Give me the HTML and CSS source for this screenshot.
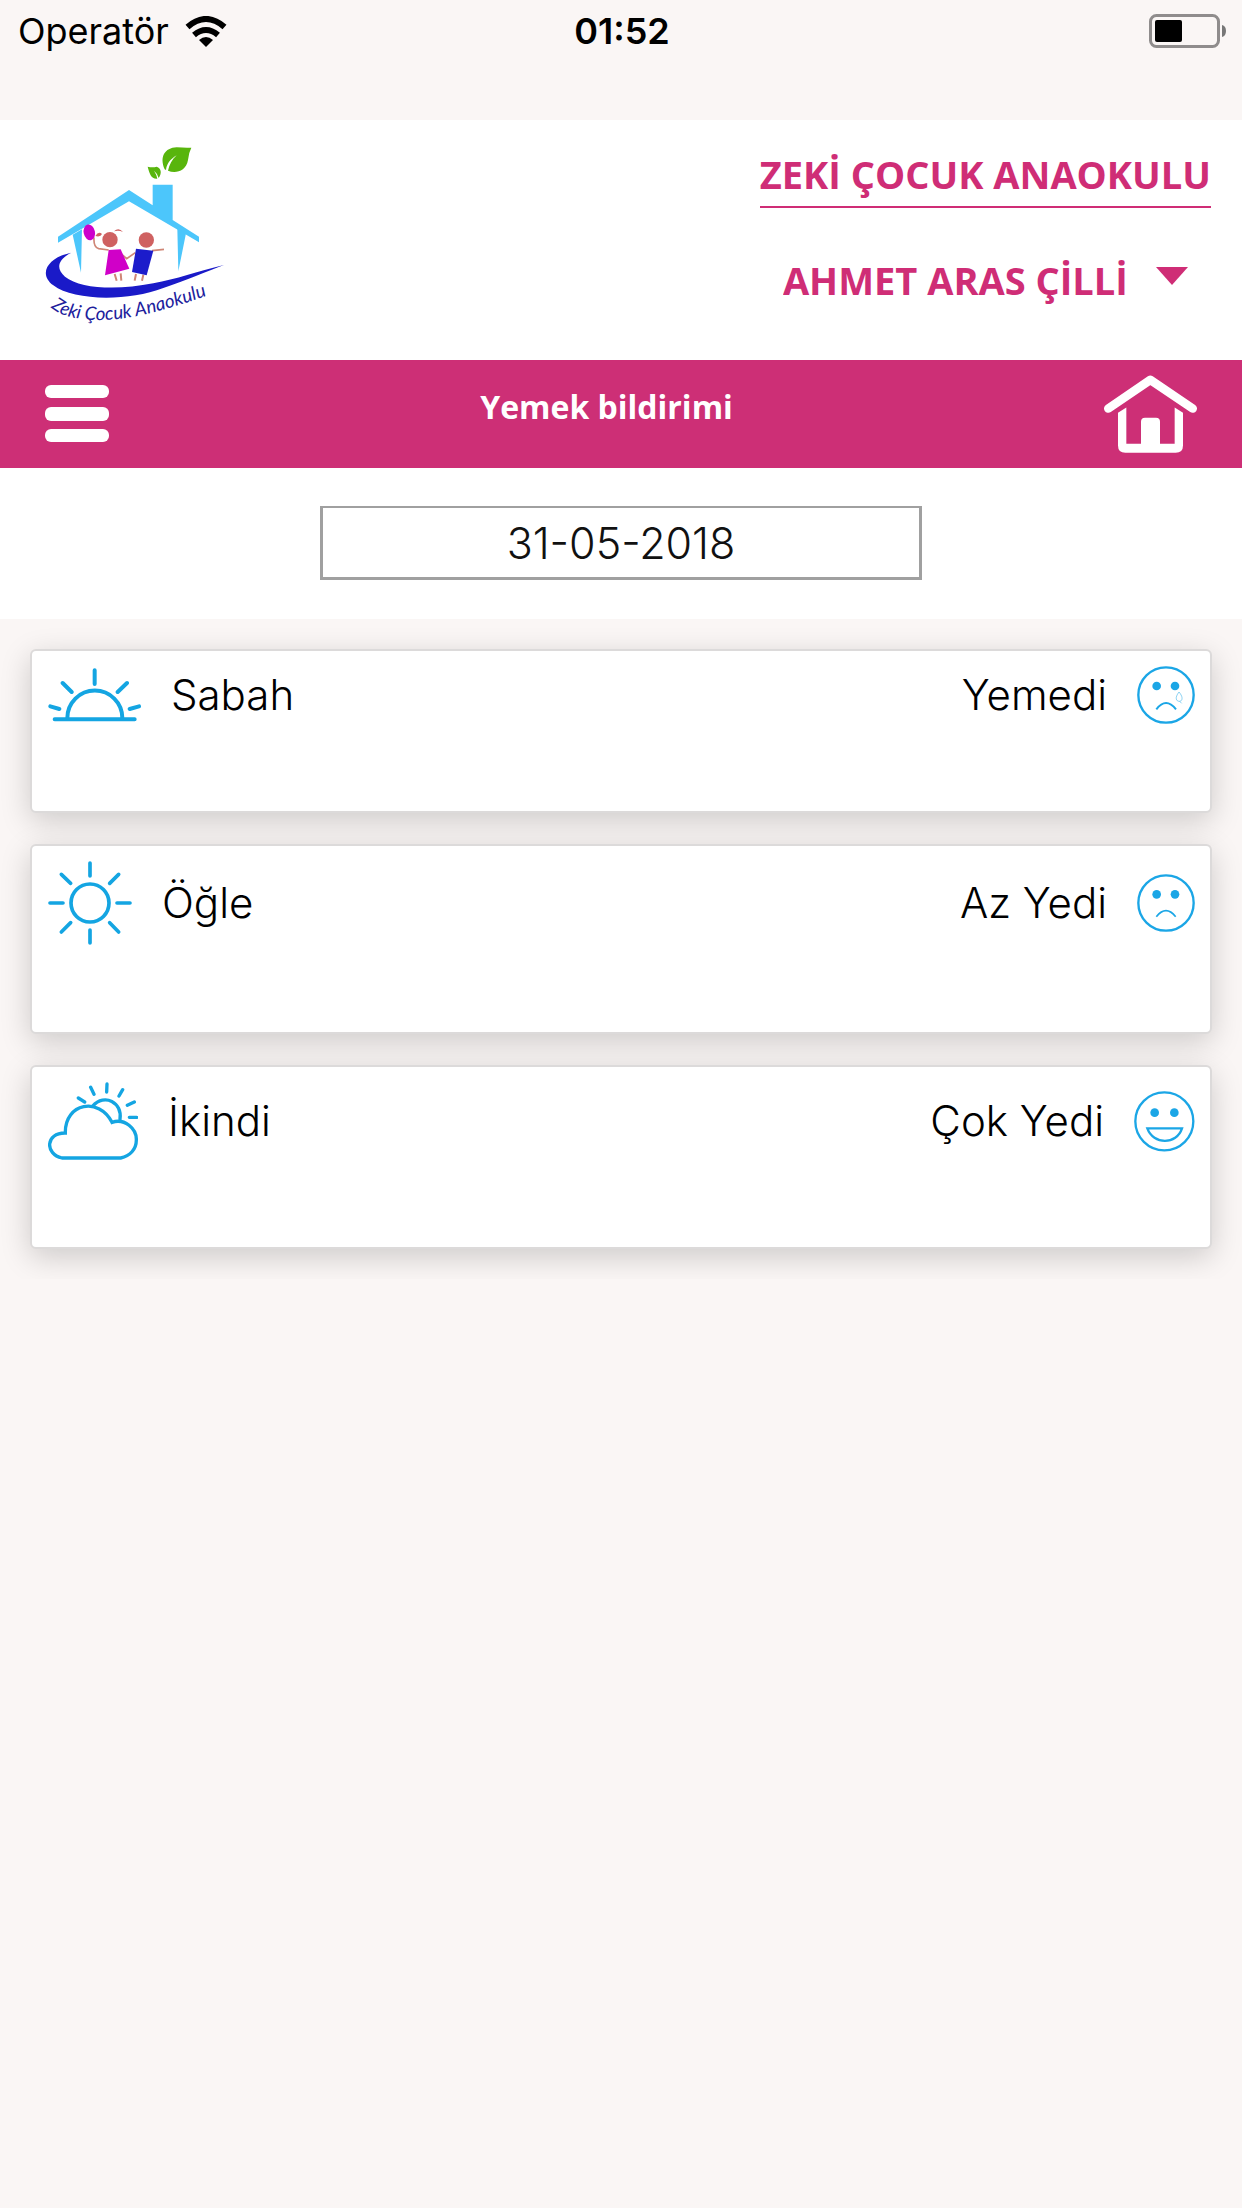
FILE: index.html
```html
<!DOCTYPE html>
<html lang="tr">
<head>
<meta charset="utf-8">
<meta name="viewport" content="width=device-width, initial-scale=1">
<title>Yemek bildirimi</title>
<link rel="stylesheet" href="styles.css">
</head>
<body>
<div class="status">
  <div class="carrier">
    <span>Operatör</span>
    <svg class="wifi" viewBox="0 0 42 31" aria-hidden="true">
      <path d="M2.500 11 Q21 -5 39.500 11" fill="none" stroke="#000" stroke-width="6"/>
      <path d="M9 19 Q21 9 33 19" fill="none" stroke="#000" stroke-width="6"/>
      <path d="M14 24 Q21 18 28 24 L21 31 Z"/>
    </svg>
  </div>
  <time class="clock">01:52</time>
  <svg class="battery" viewBox="0 0 77 34" aria-hidden="true">
    <rect x="1.500" y="1.500" width="68" height="31" rx="6" fill="none" stroke="#8f8c8c" stroke-width="3"/>
    <rect x="6" y="6" width="27" height="22" rx="2"/>
    <path d="M73 11 Q77 12 77 17 Q77 22 73 23 Z" fill="#777"/>
  </svg>
</div>

<header class="header">
  <svg class="logo" viewBox="0 0 630 630" role="img" aria-label="Zeki Çocuk Anaokulu">
    <path d="M124 368 C60 380 20 428 70 466 C130 512 290 516 400 474 C470 450 530 425 582 405 C500 425 440 447 370 460 C260 482 150 476 105 440 C76 416 84 388 124 368 Z" fill="#1a1ac8"/>
    <path d="M84 320 L297 180 L368 226 V164 H428 V270 L507 320 V337 L297 214 L84 338 Z" fill="#4cc6fb"/>
    <path d="M128 314 L156 298 L153 428 Z M442 296 L468 310 L445 424 Z" fill="#4cc6fb"/>
    <path d="M404 118 C388 80 404 54 440 52 Q466 54 484 53 Q476 68 474 90 C468 124 436 132 414 122 C418 104 426 88 440 76 C420 88 410 102 408 120 Z" fill="#58b50c"/>
    <path d="M353 110 Q368 114 380 110 C394 114 396 130 386 144 Q384 132 372 122 Q380 134 382 146 C364 148 358 130 353 110 Z" fill="#58b50c"/>
    <path d="M192 322 Q190 352 206 356 L236 360 M272 370 L290 386 L316 368 M366 362 L402 358" fill="none" stroke="#cf8676" stroke-width="5"/>
    <path d="M254 432 L260 452 M272 430 L274 452 M318 432 L314 452 M340 434 L336 452" stroke="#cf8676" stroke-width="6"/>
    <ellipse cx="178" cy="307" rx="17" ry="24" transform="rotate(-12 178 307)" fill="#cc00cc"/>
    <path d="M196 318 Q206 302 216 312 Q212 322 196 318 Z M252 304 Q266 290 279 306 Q266 300 252 304 Z" fill="#cf6161"/>
    <circle cx="240" cy="329" r="23" fill="#cf6161"/>
    <circle cx="349" cy="330" r="23" fill="#cf6161"/>
    <path d="M236 360 L272 358 L298 416 L225 436 Z" fill="#d000c8"/>
    <path d="M318 356 L370 362 L350 436 L306 426 Z" fill="#1c1ccb"/>
    <path id="logo-curve" d="M62 532 Q100 566 190 570 Q330 576 580 478" fill="none"/>
    <text class="logo-text"><textPath href="#logo-curve">Zeki Çocuk Anaokulu</textPath></text>
  </svg>
  <div class="account">
    <p class="school">ZEKİ ÇOCUK ANAOKULU</p>
    <div class="child">
      <select class="child-select" aria-label="Öğrenci">
        <option>AHMET ARAS ÇİLLİ</option>
      </select>
      <svg class="caret" viewBox="0 0 32 18" aria-hidden="true"><path d="M0 0 H32 L16 18 Z" fill="#cf2d76"/></svg>
    </div>
  </div>
</header>

<nav class="bar">
  <button class="icon-button" type="button" aria-label="Menü">
    <svg class="menu-icon" viewBox="0 0 64 58"><g fill="#fff"><rect width="64" height="13" rx="6"/><rect y="22" width="64" height="14" rx="6"/><rect y="44" width="64" height="13" rx="6"/></g></svg>
  </button>
  <h1 class="title">Yemek bildirimi</h1>
  <a class="icon-button" href="#" aria-label="Ana sayfa">
    <svg class="home-icon" viewBox="0 0 279 233">
      <path d="M13 100 L139 14 L266 100" fill="none" stroke="#fff" stroke-width="26" stroke-linecap="round" stroke-linejoin="round"/>
      <path d="M42 113 L67 97 V206 H111 V140 Q111 128 123 128 H156 Q168 128 168 140 V206 H212 V97 L237 113 V211 Q237 233 215 233 H64 Q42 233 42 211 Z" fill="#fff"/>
    </svg>
  </a>
</nav>

<div class="date-strip">
  <input class="date" type="text" value="31-05-2018" aria-label="Tarih">
</div>

<main>
  <ul class="meals">
    <li class="meal">
      <svg class="sunrise" viewBox="0 0 279 162" fill="none" stroke="#14a5e2" stroke-width="12" stroke-linecap="round" aria-hidden="true">
        <path d="M20 154 H260 M58 150 A81 81 0 0 1 223 150 M140 7 V48 M44 45 L71 72 M237 45 L209 72 M7 115 L34 123 M273 115 L245 123"/>
      </svg>
      <span class="meal-name">Sabah</span>
      <span class="meal-state">Yemedi</span>
      <svg class="face" viewBox="0 0 174 174" fill="none" stroke="#1ba6e6" aria-hidden="true">
        <circle cx="87" cy="87" r="83" stroke-width="7"/>
        <path d="M58 130 Q87 92 117 130" stroke-width="6"/>
        <g fill="#1ba6e6" stroke="none"><circle cx="59" cy="60" r="13"/><circle cx="114" cy="60" r="13"/></g>
        <path d="M126 78 C112 96 118 106 127 106 C136 106 140 94 126 78 M128 106 L134 112" stroke-width="3" opacity=".5"/>
      </svg>
    </li>
    <li class="meal">
      <svg class="sun" viewBox="0 0 252 252" fill="none" stroke="#14a5e2" stroke-width="11" stroke-linecap="round" aria-hidden="true">
        <circle cx="126" cy="126" r="57"/>
        <path d="M126 6 V45 M126 207 V246 M6 126 H45 M207 126 H246 M40 40 L68 67 M212 40 L185 67 M40 213 L68 185 M212 213 L185 185"/>
      </svg>
      <span class="meal-name">Öğle</span>
      <span class="meal-state">Az Yedi</span>
      <svg class="face" viewBox="0 0 174 174" fill="none" stroke="#1ba6e6" aria-hidden="true">
        <circle cx="87" cy="87" r="83" stroke-width="7"/>
        <path d="M58 128 Q87 92 116 128" stroke-width="5"/>
        <g fill="#1ba6e6" stroke="none"><circle cx="59" cy="61" r="13"/><circle cx="114" cy="61" r="13"/></g>
      </svg>
    </li>
    <li class="meal">
      <svg class="cloud" viewBox="0 0 270 234" fill="none" stroke="#14a5e2" stroke-width="10" stroke-linecap="round" aria-hidden="true">
        <path d="M42 228 C-10 216 -8 152 52 153 C50 62 154 44 192 121 C230 108 266 140 265 174 C265 202 246 222 218 228 Z"/>
        <path d="M134 72 C170 32 224 62 216 112"/>
        <path d="M91 48 L110 60 M128 16 L138 37 M177 6 L176 30 M224 23 L213 42 M259 60 L238 70 M244 106 H266"/>
      </svg>
      <span class="meal-name">İkindi</span>
      <span class="meal-state">Çok Yedi</span>
      <svg class="face face-large" viewBox="0 0 183 183" fill="none" stroke="#1ba6e6" aria-hidden="true">
        <circle cx="91" cy="91" r="87" stroke-width="7"/>
        <path d="M40 112 H144 C128 162 58 162 40 112 Z" stroke-width="7"/>
        <g fill="#1ba6e6" stroke="none"><circle cx="62" cy="65" r="13"/><circle cx="121" cy="65" r="13"/></g>
      </svg>
    </li>
  </ul>
</main>
</body>
</html>
```
FILE: styles.css
```css
* {
  box-sizing: border-box;
}

body {
  margin: 0;
  background: #faf6f5;
  color: #000;
  font-family: Inter, "Liberation Sans", sans-serif;
}

svg {
  display: block;
  flex: none;
}

/* Status bar */
.status {
  display: grid;
  grid-template-columns: 1fr auto 1fr;
  align-items: center;
  padding: 9px 16px 67px 18px;
  font-size: 36px;
  line-height: 44px;
}

.carrier {
  display: flex;
  align-items: center;
  gap: 16px;
}

.wifi {
  width: 42px;
  height: 31px;
}

.clock {
  font-weight: 600;
}

.battery {
  justify-self: end;
  width: 77px;
  height: 34px;
}

/* School header */
.header {
  display: flex;
  justify-content: space-between;
  align-items: flex-start;
  padding: 10px 31px 20px 30px;
  background: #fff;
}

.logo {
  width: 210px;
  height: 210px;
}

.logo-text {
  fill: #20209c;
  font: italic 56px Lato, sans-serif;
}

.account {
  display: flex;
  flex-direction: column;
  align-items: center;
  gap: 42px;
  padding-top: 14px;
  color: #cf2d76;
  font: 700 38px/60px "Open Sans", "Noto Sans", sans-serif;
}

.school {
  margin: 0;
  padding-bottom: 2px;
  border-bottom: 2px solid #cf2d76;
}

.child {
  display: flex;
  align-items: center;
  gap: 28px;
}

.child-select {
  appearance: none;
  padding: 0;
  border: 0;
  background: none;
  color: inherit;
  font: inherit;
}

.caret {
  width: 32px;
  height: 18px;
  margin-bottom: 8px;
}

/* Title bar */
.bar {
  display: flex;
  justify-content: space-between;
  align-items: center;
  padding: 15px 45px;
  background: #cd2f76;
}

.icon-button {
  padding: 0;
  border: 0;
  background: none;
}

.menu-icon {
  width: 64px;
  height: 58px;
}

.home-icon {
  width: 93px;
  height: 78px;
}

.title {
  margin: 0;
  padding-bottom: 14px;
  color: #fff;
  font: 700 32px/48px "Open Sans", "Noto Sans", sans-serif;
}

/* Date */
.date-strip {
  display: flex;
  justify-content: center;
  padding: 38px 20px 39px;
  background: #fff;
}

.date {
  width: 602px;
  max-width: 100%;
  height: 74px;
  padding: 0;
  border: 3px solid #a0a0a0;
  border-top-width: 2px;
  border-radius: 0;
  background: #fff;
  color: #111;
  font: 300 43px/60px Inter, sans-serif;
  text-align: center;
}

/* Meal cards */
.meals {
  display: flex;
  flex-direction: column;
  gap: 31px;
  margin: 0;
  padding: 30px;
  list-style: none;
}

.meal {
  display: flex;
  align-items: center;
  gap: 30px;
  padding: 15px 15px 87px 16px;
  border: 2px solid #dcdada;
  border-radius: 6px;
  background: #fff;
  box-shadow: 0 8px 30px rgba(0, 0, 0, 0.18);
  font-size: 42px;
  font-weight: 300;
  line-height: 56px;
}

.meal-state {
  margin-left: auto;
}

.sunrise {
  width: 93px;
  height: 54px;
}

.sun {
  width: 84px;
  height: 84px;
}

.cloud {
  width: 90px;
  height: 78px;
}

.face {
  width: 58px;
  height: 58px;
}

.face-large {
  width: 61px;
  height: 61px;
}
```
